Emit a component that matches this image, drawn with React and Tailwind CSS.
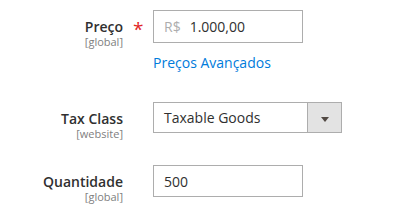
import React from 'react';

const FONT = { fontFamily: '"Open Sans", "Liberation Sans", sans-serif' };

function FieldLabel({ label, scope, required }) {
  return (
    <>
      <div className="w-[123px] shrink-0 text-right pt-[8px]">
        <div className="text-[14px] leading-[17px] font-semibold text-[#303030]">{label}</div>
        <div className="text-[11px] leading-[11px] mt-[1px] text-[#808080]">{scope}</div>
      </div>
      <div className="w-[30px] shrink-0 pl-[10px] pt-[10px]">
        {required && <span className="block text-[19px] leading-[19px] text-[#e22626]">*</span>}
      </div>
    </>
  );
}

export default function App() {
  return (
    <div className="w-[412px] h-[209px] bg-white overflow-hidden" style={FONT}>
      {/* Preço */}
      <div className="flex items-start pt-[10px]">
        <FieldLabel label="Preço" scope="[global]" required />
        <div className="flex flex-col">
          <div className="w-[150px] h-[33px] border border-[#adadad] flex items-center pl-[10px] text-[14px]">
            <span className="text-[#adadad]">R$</span>
            <span className="ml-[9px] text-[#303030]">1.000,00</span>
          </div>
          <a className="mt-[10px] text-[14px] leading-[19px] text-[#007bdb]" href="#">Preços Avançados</a>
        </div>
      </div>

      {/* Tax Class */}
      <div className="flex items-start mt-[30px]">
        <FieldLabel label="Tax Class" scope="[website]" />
        <div className="w-[189px] h-[31px] border border-[#adadad] flex text-[14px] text-[#303030]">
          <div className="flex-1 flex items-center pl-[10px]">Taxable Goods</div>
          <div className="w-[34px] border-l border-[#adadad] bg-[#e3e3e3] flex items-center justify-center">
            <svg width="8" height="5" viewBox="0 0 8 5" className="mt-[3px]">
              <path d="M0 0 H8 L4 5 Z" fill="#514943" />
            </svg>
          </div>
        </div>
      </div>

      {/* Quantidade */}
      <div className="flex items-start mt-[26px]">
        <FieldLabel label="Quantidade" scope="[global]" />
        <div className="w-[150px] h-[32px] border border-[#adadad] flex items-center pl-[10px] text-[14px] text-[#303030]">
          500
        </div>
      </div>
    </div>
  );
}
